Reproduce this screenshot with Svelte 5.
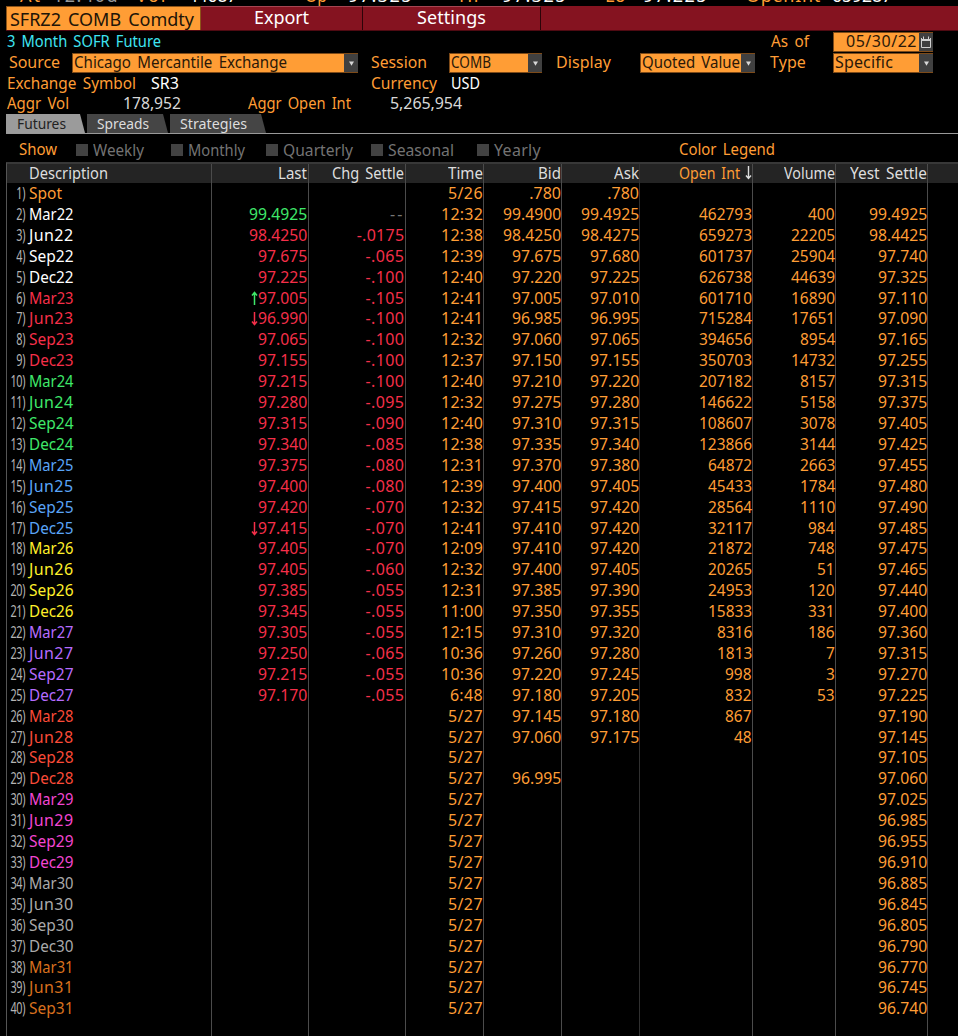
<script>
  const ticks = [
    { t: 'At', x: 20, w: 22, c: 'o' }, { t: '12:40d', x: 53, w: 66, c: 'g' },
    { t: 'Vol', x: 136, w: 31, c: 'o' }, { t: '44687', x: 188, w: 49, c: 'w' },
    { t: 'Op', x: 305, w: 22, c: 'o' }, { t: '97.325', x: 348, w: 65, c: 'w' },
    { t: 'Hi', x: 459, w: 21, c: 'o' }, { t: '97.325', x: 502, w: 65, c: 'w' },
    { t: 'Lo', x: 605, w: 21, c: 'o' }, { t: '97.225', x: 643, w: 65, c: 'w' },
    { t: 'OpenInt', x: 746, w: 75, c: 'o' }, { t: '659287', x: 832, w: 60, c: 'w' }
  ];
  const columns = ['Last', 'Chg Settle', 'Time', 'Bid', 'Ask', 'Open Int', 'Volume', 'Yest Settle'];
  const periods = [['Weekly', 76], ['Monthly', 171], ['Quarterly', 266], ['Seasonal', 371], ['Yearly', 477]];
  const source = `Spot|||5/26|.780|.780|||
Mar22|99.4925|--|12:32|99.4900|99.4925|462793|400|99.4925
Jun22|98.4250|-.0175|12:38|98.4250|98.4275|659273|22205|98.4425
Sep22|97.675|-.065|12:39|97.675|97.680|601737|25904|97.740
Dec22|97.225|-.100|12:40|97.220|97.225|626738|44639|97.325
Mar23|↑97.005|-.105|12:41|97.005|97.010|601710|16890|97.110
Jun23|↓96.990|-.100|12:41|96.985|96.995|715284|17651|97.090
Sep23|97.065|-.100|12:32|97.060|97.065|394656|8954|97.165
Dec23|97.155|-.100|12:37|97.150|97.155|350703|14732|97.255
Mar24|97.215|-.100|12:40|97.210|97.220|207182|8157|97.315
Jun24|97.280|-.095|12:32|97.275|97.280|146622|5158|97.375
Sep24|97.315|-.090|12:40|97.310|97.315|108607|3078|97.405
Dec24|97.340|-.085|12:38|97.335|97.340|123866|3144|97.425
Mar25|97.375|-.080|12:31|97.370|97.380|64872|2663|97.455
Jun25|97.400|-.080|12:39|97.400|97.405|45433|1784|97.480
Sep25|97.420|-.070|12:32|97.415|97.420|28564|1110|97.490
Dec25|↓97.415|-.070|12:41|97.410|97.420|32117|984|97.485
Mar26|97.405|-.070|12:09|97.410|97.420|21872|748|97.475
Jun26|97.405|-.060|12:32|97.400|97.405|20265|51|97.465
Sep26|97.385|-.055|12:31|97.385|97.390|24953|120|97.440
Dec26|97.345|-.055|11:00|97.350|97.355|15833|331|97.400
Mar27|97.305|-.055|12:15|97.310|97.320|8316|186|97.360
Jun27|97.250|-.065|10:36|97.260|97.280|1813|7|97.315
Sep27|97.215|-.055|10:36|97.220|97.245|998|3|97.270
Dec27|97.170|-.055|6:48|97.180|97.205|832|53|97.225
Mar28|||5/27|97.145|97.180|867||97.190
Jun28|||5/27|97.060|97.175|48||97.145
Sep28|||5/27|||||97.105
Dec28|||5/27|96.995||||97.060
Mar29|||5/27|||||97.025
Jun29|||5/27|||||96.985
Sep29|||5/27|||||96.955
Dec29|||5/27|||||96.910
Mar30|||5/27|||||96.885
Jun30|||5/27|||||96.845
Sep30|||5/27|||||96.805
Dec30|||5/27|||||96.790
Mar31|||5/27|||||96.770
Jun31|||5/27|||||96.745
Sep31|||5/27|||||96.740`;
  const rows = source.split('\n').map((line) => line.split('|'));
  const yearClass = (name) => (name === 'Spot' ? 'spot' : 'y' + name.slice(-2));

  const advance = { '.': 5.2, '-': 7.2, ':': 6.6, '/': 8.6 };
  const valueWidth = (text) => [...text].reduce((sum, ch) => sum + (advance[ch] ?? 8.84), 0);

  // Makes a label take up the given width: narrows the glyphs when it is too long,
  // opens up the letter spacing when it is too short.
  function fit(node, width) {
    if (!node.textContent) return;
    node.style.letterSpacing = '0px';
    const natural = node.getBoundingClientRect().width;
    if (natural > width * 1.01) {
      node.style.width = width + 'px';
      node.style.transform = `scaleX(${width / natural})`;
    } else {
      node.style.letterSpacing = (width - natural) / node.textContent.length + 'px';
    }
  }
</script>

{#snippet label(text, x, w, cls)}
  <span class="cell" style="--x:{x}px"><span class="txt {cls}" use:fit={w}>{text}</span></span>
{/snippet}

{#snippet arrow(up)}
  <svg class="arrow" width="7" height="15" viewBox="0 0 7 15">
    {#if up}<path d="M3.5 14V2M1 4.5L3.5 1.5L6 4.5" fill="none" stroke="#3fe86a" stroke-width="1.5" />
    {:else}<path d="M3.5 1V13M1 10.5L3.5 13.5L6 10.5" fill="none" stroke="#f52f49" stroke-width="1.5" />{/if}
  </svg>
{/snippet}

{#snippet drop()}
  <span class="drop"><svg width="5" height="5" viewBox="0 0 5 5"><path d="M0 0.5H5L2.5 4.8Z" fill="#d8d8d8" /></svg></span>
{/snippet}

<main>
  <div class="ticker">
    {#each ticks as k}{@render label(k.t, k.x, k.w, k.c)}{/each}
  </div>

  <nav class="bar">
    <div class="security"><span class="txt" use:fit={184}>SFRZ2 COMB Comdty</span></div>
    <button class="export"><span class="txt" use:fit={55}>Export</span></button>
    <button class="settings"><span class="txt" use:fit={69}>Settings</span></button>
  </nav>

  <section class="form">
    <div class="line l1">
      {@render label('3 Month SOFR Future', 7, 154, 'cyan')}
      {@render label('As of', 771, 38, 'o')}
      <div class="field date"><span class="txt" use:fit={71}>05/30/22</span>
        <span class="drop"><svg width="10" height="12" viewBox="0 0 10 12"><path d="M.5 2V11.5H9.5V2" fill="none" stroke="#d0d0d0" /><path d="M1 3H9V5H1ZM2 0.5H3V3H2ZM7 0.5H8V3H7Z" fill="#d0d0d0" /></svg></span>
      </div>
    </div>
    <div class="line l2">
      {@render label('Source', 9, 51, 'o')}
      <div class="field src"><span class="txt" use:fit={213}>Chicago Mercantile Exchange</span>{@render drop()}</div>
      {@render label('Session', 371, 56, 'o')}
      <div class="field ses"><span class="txt" use:fit={40}>COMB</span>{@render drop()}</div>
      {@render label('Display', 556, 55, 'o')}
      <div class="field dis"><span class="txt" use:fit={98}>Quoted Value</span>{@render drop()}</div>
      {@render label('Type', 770, 36, 'o')}
      <div class="field typ"><span class="txt" use:fit={58}>Specific</span>{@render drop()}</div>
    </div>
    <div class="line l3">
      {@render label('Exchange Symbol', 7, 129, 'o')}
      {@render label('SR3', 151, 28, 'w')}
      {@render label('Currency', 371, 66, 'o')}
      {@render label('USD', 451, 29, 'w')}
    </div>
    <div class="line l4">
      {@render label('Aggr Vol', 7, 62, 'o')}
      {@render label('178,952', 123, 58, 'lt')}
      {@render label('Aggr Open Int', 248, 103, 'o')}
      {@render label('5,265,954', 390, 72, 'lt')}
    </div>
  </section>

  <div class="tabs">
    <span class="tab active"><span class="txt" use:fit={49}>Futures</span></span>
    <span class="tab spreads"><span class="txt" use:fit={52}>Spreads</span></span>
    <span class="tab strategies"><span class="txt" use:fit={67}>Strategies</span></span>
  </div>

  <div class="filters">
    {@render label('Show', 19, 38, 'o')}
    {#each periods as [name, x], i}
      <span class="cell check" style="--x:{x}px"><i></i><span class="txt" use:fit={[51, 57, 70, 66, 47][i]}>{name}</span></span>
    {/each}
    {@render label('Color Legend', 679, 96, 'o')}
  </div>

  <div class="table">
    <div class="row head">
      <div class="desc"><span class="txt" use:fit={79}>Description</span></div>
      {#each columns as c, i}
        <div class:o={i === 5}><span class="txt" use:fit={[29, 72, 35, 23, 25, 61, 51, 77][i]}>{c}</span>{#if i === 5}<svg class="sort" width="7" height="14" viewBox="0 0 7 14"><path d="M3.5 0V12M1 9.5L3.5 12.5L6 9.5" fill="none" stroke="#ddd" stroke-width="1.4" /></svg>{/if}</div>
      {/each}
      <div></div>
    </div>
    {#each rows as row, r}
      <div class="row">
        <div class="desc"><span class="num">{r + 1})</span><span class="txt {yearClass(row[0])}" use:fit={r ? 44.5 : 33}>{row[0]}</span></div>
        {#each row.slice(1) as value, c}
          {@const text = value.replace(/^[↑↓]/, '')}
          <div class:red={c < 2} class:green={r === 1 && c === 0} class:dash={value === '--'}>
            {#if text !== value}{@render arrow(value[0] === '↑')}{/if}<span class="txt" use:fit={valueWidth(text)}>{text}</span>
          </div>
        {/each}
        <div></div>
      </div>
    {/each}
    <div class="row tail">{#each Array(10) as _}<div></div>{/each}</div>
  </div>
</main>

<style>
  :global(body) { background: #000; overflow: hidden; }
  main { width: 958px; height: 1036px; overflow: hidden; background: #000; color: #ff9d35; font: 16px/20px "Noto Sans", sans-serif; display: flex; flex-direction: column; }
  .txt { white-space: pre; display: inline-block; flex: none; word-spacing: 2.5px; transform-origin: left; }
  .o { color: #ff9d35; } .w { color: #fff; } .g { color: #999; } .lt { color: #d8d8d8; } .cyan { color: #3fe5f2; }
  .ticker, .line, .filters { display: grid; flex: none; }
  .ticker > :global(*), .line > *, .filters > :global(*) { grid-area: 1 / 1; }
  .cell { margin-left: var(--x); justify-self: start; white-space: nowrap; }
  .ticker { height: 6px; overflow: hidden; align-content: end; font-size: 18px; }
  .ticker .cell { height: 20px; line-height: 20px; margin-bottom: 1px; }

  .bar { display: flex; flex: none; height: 25px; box-sizing: border-box; margin-left: 6px; background: #851320; border-bottom: 1px solid #4f0a12; }
  .security { width: 195px; background: #ff9d35; color: #201408; padding-left: 3px; font-size: 18px; line-height: 24px; box-sizing: border-box; border: solid #8c5318; border-width: 1px 1px 0; }
  button { appearance: none; margin: 0; padding: 0 0 2px; border: 0; border-top: 1px solid #a64552; border-right: 1px solid #2c0308; background: #851320; color: #fff; font: 18px/21px "Noto Sans", sans-serif; box-sizing: border-box; text-align: center; }
  .export { width: 162px; } .settings { width: 178px; }

  .form { flex: none; height: 82px; }
  .line { height: 21px; line-height: 21px; }
  .l3 { height: 20px; } .l4 { height: 20px; line-height: 20px; }
  .field { display: flex; box-sizing: border-box; height: 20px; margin-top: 1px; background: #ff9d35; color: #2a1808; justify-self: start; border: solid #7d4a18; border-width: 1px 0 1px 1px; line-height: 17px; justify-content: space-between; padding-left: 1px; }
  .drop { width: 14px; background: #404040; display: flex; align-items: center; justify-content: center; flex: none; }
  .date { margin-left: 833px; width: 100px; padding-left: 12px; }
  .src { margin-left: 72px; width: 286px; }
  .ses { margin-left: 449px; width: 93px; }
  .dis { margin-left: 640px; width: 115px; }
  .typ { margin-left: 833px; width: 100px; }

  .tabs { display: flex; flex: none; height: 20px; box-sizing: border-box; margin: 1px 0 0 6px; border-bottom: 1px solid #999; gap: 2px; font-size: 15px; line-height: 19px; }
  .tab { background: #454545; color: #ddd; box-sizing: border-box; padding-left: 10px; clip-path: polygon(0 0, calc(100% - 5px) 0, 100% 100%, 0 100%); }
  .active { width: 79px; background: #9b9b9b; color: #222; padding-left: 11px; }
  .spreads { width: 81px; } .strategies { width: 96px; padding-left: 10px; }
  .filters { height: 28px; line-height: 30px; }
  .check { display: flex; align-items: center; gap: 5px; color: #737373; padding-top: 3px; height: 29px; box-sizing: border-box; line-height: 26px; }
  .check i { width: 12px; height: 12px; background: #424242; }

  .table { margin-left: 6px; border-left: 1px solid #555; border-top: 2px solid #383838; flex: none; }
  .row { display: grid; grid-template-columns: 205px 97px 97px 78px 78px 78px 113px 83px 92px 1fr; height: 20.91px; line-height: 21px; }
  .row > div { border-right: 1px solid #4b4b4b; display: flex; justify-content: flex-end; min-width: 0; }
  .row > div:nth-child(2), .row > div:nth-child(3) { padding-right: .6px; }
  .row > div:nth-child(6) { border-right-color: #303030; }
  .row > div:last-child { border-right: 0; }
  .row > .desc { justify-content: flex-start; }
  .head { height: 19px; line-height: 18px; background: #242424; color: #ddd; }
  .head .desc { padding-left: 22px; }
  .tail { height: 60px; }
  .num { width: 18px; color: #b4b4b4; transform: scaleX(.68); transform-origin: right; letter-spacing: -.6px; flex: none; display: flex; justify-content: flex-end; margin-right: 4px; }
  .sort { margin: 2px 0 0 5px; }
  .arrow { margin-top: 3px; flex: none; }
  .red { color: #f52f49; } .green { color: #3fe86a; } .dash { color: #777; }
  .y22 { color: #fff; } .y23 { color: #f52f49; } .y24 { color: #3fe86a; } .y25 { color: #5aa5f8; } .y26 { color: #fff02a; }
  .y27 { color: #b66cff; } .y28 { color: #fa4b38; } .y29 { color: #f246d2; } .y30 { color: #aaa; } .y31 { color: #d8701e; }
</style>
